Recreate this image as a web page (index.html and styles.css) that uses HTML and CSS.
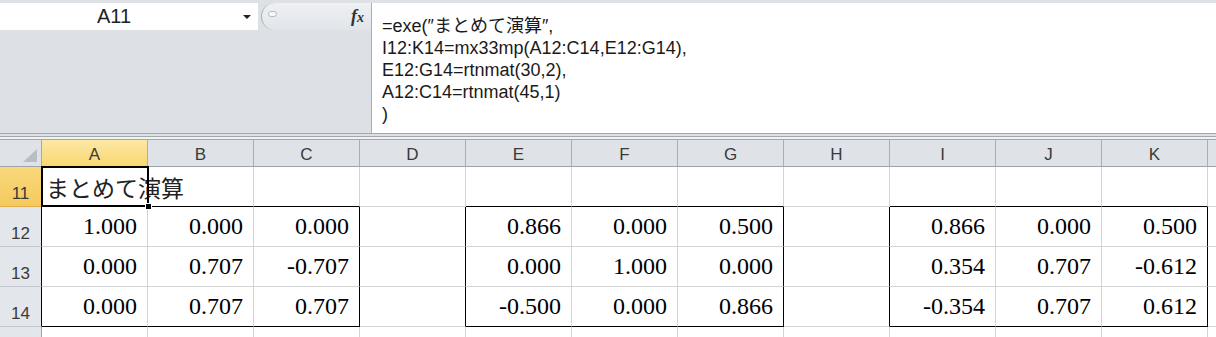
FILE: index.html
```html
<!DOCTYPE html>
<html lang="ja">
<head>
    <meta charset="UTF-8">
    <title>まとめて演算</title>
    <link rel="stylesheet" href="styles.css">
</head>
<body>
    <div class="formula-bar">
        <div class="fb-left">
            <div class="fb-top">
                <div class="name-box">
                    <span class="name-text">A11</span>
                    <span class="name-arrow"></span>
                </div>
                <div class="fb-tools">
                    <span class="grip"></span>
                    <span class="fx">f<span class="fx-x">x</span></span>
                </div>
            </div>
        </div>
        <div class="fb-input">
            <div>=exe(″まとめて演算″,</div>
            <div>I12:K14=mx33mp(A12:C14,E12:G14),</div>
            <div>E12:G14=rtnmat(30,2),</div>
            <div>A12:C14=rtnmat(45,1)</div>
            <div>)</div>
        </div>
    </div>
    <div class="gap"></div>

    <div class="sheet">
        <!-- header -->
        <div class="corner"><span class="corner-tri"></span></div>
        <div class="col-head sel-col">A</div>
        <div class="col-head">B</div>
        <div class="col-head">C</div>
        <div class="col-head">D</div>
        <div class="col-head">E</div>
        <div class="col-head">F</div>
        <div class="col-head">G</div>
        <div class="col-head">H</div>
        <div class="col-head">I</div>
        <div class="col-head">J</div>
        <div class="col-head">K</div>
        <div class="col-head"></div>

        <!-- row 11 -->
        <div class="row-head sel-row">11</div>
        <div class="cell text-cell edge-b">まとめて演算<span class="active-box"></span></div>
        <div class="cell edge-b"></div>
        <div class="cell edge-b"></div>
        <div class="cell"></div>
        <div class="cell edge-b"></div>
        <div class="cell edge-b"></div>
        <div class="cell edge-b"></div>
        <div class="cell"></div>
        <div class="cell edge-b"></div>
        <div class="cell edge-b"></div>
        <div class="cell edge-b"></div>
        <div class="cell"></div>

        <!-- row 12 -->
        <div class="row-head edge-r">12</div>
        <div class="cell">1.000</div>
        <div class="cell">0.000</div>
        <div class="cell edge-r">0.000</div>
        <div class="cell edge-r"></div>
        <div class="cell">0.866</div>
        <div class="cell">0.000</div>
        <div class="cell edge-r">0.500</div>
        <div class="cell edge-r"></div>
        <div class="cell">0.866</div>
        <div class="cell">0.000</div>
        <div class="cell edge-r">0.500</div>
        <div class="cell"></div>

        <!-- row 13 -->
        <div class="row-head edge-r">13</div>
        <div class="cell">0.000</div>
        <div class="cell">0.707</div>
        <div class="cell edge-r">-0.707</div>
        <div class="cell edge-r"></div>
        <div class="cell">0.000</div>
        <div class="cell">1.000</div>
        <div class="cell edge-r">0.000</div>
        <div class="cell edge-r"></div>
        <div class="cell">0.354</div>
        <div class="cell">0.707</div>
        <div class="cell edge-r">-0.612</div>
        <div class="cell"></div>

        <!-- row 14 -->
        <div class="row-head edge-r">14</div>
        <div class="cell edge-b">0.000</div>
        <div class="cell edge-b">0.707</div>
        <div class="cell edge-b edge-r">0.707</div>
        <div class="cell edge-r"></div>
        <div class="cell edge-b">-0.500</div>
        <div class="cell edge-b">0.000</div>
        <div class="cell edge-b edge-r">0.866</div>
        <div class="cell edge-r"></div>
        <div class="cell edge-b">-0.354</div>
        <div class="cell edge-b">0.707</div>
        <div class="cell edge-b edge-r">0.612</div>
        <div class="cell"></div>

        <!-- row 15 (only its top edge is in view) -->
        <div class="row-head"></div>
        <div class="cell"></div>
        <div class="cell"></div>
        <div class="cell"></div>
        <div class="cell"></div>
        <div class="cell"></div>
        <div class="cell"></div>
        <div class="cell"></div>
        <div class="cell"></div>
        <div class="cell"></div>
        <div class="cell"></div>
        <div class="cell"></div>
        <div class="cell"></div>
    </div>
</body>
</html>
```

FILE: styles.css
```css
body {
    margin: 0;
    width: 1216px;
    height: 337px;
    overflow: hidden;
    background-color: #fff;
    font-family: "Liberation Sans", "Noto Sans CJK JP", sans-serif;
}

/* formula bar */
.formula-bar {
    display: flex;
    height: 137px;
    box-sizing: border-box;
    padding-top: 3px;
    background-color: #dde1e6;
    border-bottom: 4px double #a3a8ae;
}
.fb-left {
    width: 371px;
    flex-shrink: 0;
}
.fb-top {
    display: flex;
    height: 27px;
}
.name-box {
    width: 258px;
    display: flex;
    align-items: center;
    background-color: #fff;
}
.name-text {
    width: 228px;
    text-align: center;
    font-size: 20px;
    color: #222;
}
.name-arrow {
    margin-left: 15px;
    border-left: 4px solid transparent;
    border-right: 4px solid transparent;
    border-top: 4px solid #222;
}
.fb-tools {
    flex: 1;
    display: flex;
    align-items: center;
    justify-content: space-between;
    margin-left: 3px;
    padding: 0 7px 0 6px;
    border-left: 1px solid #a9aeb4;
    border-radius: 14px 0 0 14px;
    background: linear-gradient(#eef0f3, #e1e5ea);
}
.grip {
    align-self: flex-start;
    margin-top: 8px;
    width: 7px;
    height: 4px;
    border: 1px solid #b8bcc2;
    border-radius: 3px;
    background-color: #f6f7f9;
}
.fx {
    font-family: "Liberation Serif", serif;
    font-style: italic;
    font-weight: bold;
    font-size: 18px;
    color: #333;
}
.fx-x {
    font-size: 14px;
}
.fb-input {
    flex: 1;
    box-sizing: border-box;
    height: 130px;
    padding: 12px 0 0 10px;
    background-color: #fff;
    border-left: 1px solid #a9aeb4;
    font-size: 18px;
    line-height: 22px;
    color: #1a1a1a;
    white-space: nowrap;
}
.gap {
    height: 2px;
    background-color: #f1f2f4;
    border-bottom: 1px solid #9fa5ac;
}

/* sheet */
.sheet {
    display: grid;
    grid-template-columns: 42px repeat(11, 106px) 40px;
    grid-template-rows: 27px repeat(5, 40px);
}
.corner,
.col-head,
.row-head,
.cell {
    box-sizing: border-box;
    display: flex;
    border-right: 1px solid #d4d4d4;
    border-bottom: 1px solid #d4d4d4;
}
.corner {
    justify-content: flex-end;
    align-items: flex-end;
    padding: 0 4px 4px 0;
    background-color: #dfe3e8;
    border-right-color: #a3a9b0;
    border-bottom-color: #9da3aa;
}
.corner-tri {
    width: 14px;
    height: 13px;
    background-color: #b9bec5;
    clip-path: polygon(100% 0, 100% 100%, 0 100%);
}
.col-head {
    justify-content: center;
    align-items: center;
    padding-top: 3px;
    background-color: #dfe3e8;
    border-right-color: #a9afb6;
    border-bottom-color: #9da3aa;
    font-size: 17px;
    color: #3a3a3a;
}
.sel-col {
    background: linear-gradient(#fce9a6, #f9d670);
    border-bottom-color: #e5b547;
}
.row-head {
    justify-content: center;
    align-items: flex-end;
    padding-bottom: 2px;
    background-color: #e3e6ea;
    border-right-color: #9da3aa;
    border-bottom-color: #c3c8ce;
    font-size: 17px;
    color: #3a3a3a;
}
.sel-row {
    background: linear-gradient(#f9d97c, #f5c95c);
    border-bottom-color: #e2b14a;
}
.cell {
    justify-content: flex-end;
    align-items: center;
    padding-right: 10px;
    font-family: "Liberation Serif", serif;
    font-size: 24px;
    color: #000;
    white-space: nowrap;
}
.text-cell {
    position: relative;
    justify-content: flex-start;
    padding-left: 4px;
    font-family: "Noto Sans CJK JP", sans-serif;
    font-size: 23px;
    color: #222;
}
.edge-b {
    border-bottom-color: #000;
}
.edge-r {
    border-right-color: #000;
}

/* selected cell outline */
.active-box {
    position: absolute;
    top: -1px;
    left: -1px;
    right: -2px;
    bottom: -1px;
    border: 2px solid #000;
}
.active-box::after {
    content: "";
    position: absolute;
    right: -5px;
    bottom: -5px;
    width: 5px;
    height: 5px;
    background-color: #000;
    border: 1px solid #fff;
}
```
